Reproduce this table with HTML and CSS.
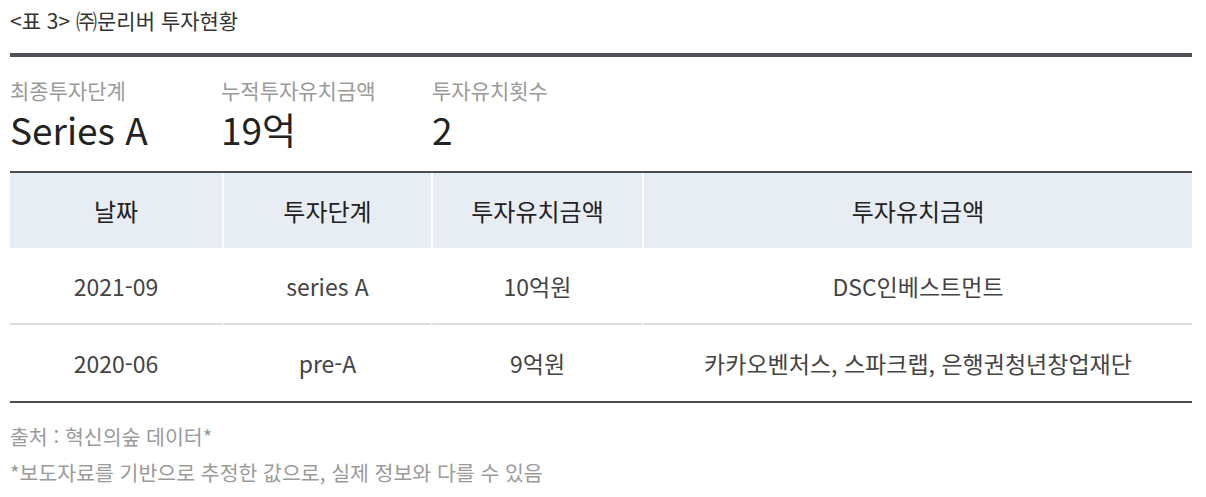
FILE: index.html
```html
<!DOCTYPE html>
<html lang="ko">
<head>
<meta charset="utf-8">
<title>㈜문리버 투자현황</title>
<link rel="stylesheet" href="styles.css">
</head>
<body>
<div class="page">
  <h3 class="caption">&lt;표 3&gt; ㈜문리버 투자현황</h3>
  <div class="rule"></div>
  <div class="stats">
    <div class="stat">
      <div class="stat-label">최종투자단계</div>
      <div class="stat-value">Series A</div>
    </div>
    <div class="stat">
      <div class="stat-label">누적투자유치금액</div>
      <div class="stat-value">19억</div>
    </div>
    <div class="stat">
      <div class="stat-label">투자유치횟수</div>
      <div class="stat-value">2</div>
    </div>
  </div>
  <table class="invest">
    <colgroup>
      <col class="c1"><col class="c2"><col class="c3"><col class="c4">
    </colgroup>
    <thead>
      <tr><th>날짜</th><th>투자단계</th><th>투자유치금액</th><th>투자유치금액</th></tr>
    </thead>
    <tbody>
      <tr class="row-first"><td>2021-09</td><td>series A</td><td>10억원</td><td>DSC인베스트먼트</td></tr>
      <tr class="row-last"><td>2020-06</td><td>pre-A</td><td>9억원</td><td>카카오벤처스, 스파크랩, 은행권청년창업재단</td></tr>
    </tbody>
  </table>
  <div class="notes">
    <p class="note">출처 : 혁신의숲 데이터*</p>
    <p class="note">*보도자료를 기반으로 추정한 값으로, 실제 정보와 다를 수 있음</p>
  </div>
</div>
</body>
</html>
```

FILE: styles.css
```css
* { box-sizing: border-box; }
html, body { margin: 0; padding: 0; background: #fff; }
body {
  font-family: "Noto Sans CJK KR", "Noto Sans", sans-serif;
  color: #333;
}
.page {
  width: 1182px;
  margin-left: 10px;
}
.caption {
  margin: 0;
  padding-top: 6px;
  height: 53px;
  font-size: 21px;
  line-height: 28px;
  font-weight: 400;
  color: #333;
}
.rule {
  height: 4px;
  background: #505156;
}
.stats {
  display: flex;
  padding-top: 19px;
  height: 114px;
}
.stat { width: 211px; }
.stat-label {
  font-size: 21px;
  line-height: 28px;
  color: #9a9a9a;
}
.stat-value {
  font-size: 37px;
  line-height: 50px;
  color: #222;
}
.invest {
  width: 1182px;
  table-layout: fixed;
  border-collapse: separate;
  border-spacing: 0;
  border-top: 2px solid #4d4e53;
  border-bottom: 2px solid #4d4e53;
}
.c1 { width: 212px; }
.c2 { width: 209px; }
.c3 { width: 211px; }
.c4 { width: 550px; }
.invest th, .invest td {
  padding: 0;
  text-align: center;
}
.invest th + th, .invest td + td { border-left: 2px solid #fff; }
.invest th {
  height: 75px;
  background: #e8ecf3;
  font-size: 24px;
  font-weight: 400;
  color: #222;
}
.invest td {
  font-size: 23px;
  color: #444;
  font-weight: 400;
}
.row-first td {
  height: 77px;
  border-bottom: 2px solid #dcdee3;
}
.row-last td { height: 76px; }
.notes { padding-top: 15px; }
.note {
  margin: 0;
  font-size: 20.5px;
  line-height: 36px;
  color: #9a9a9a;
}
```
